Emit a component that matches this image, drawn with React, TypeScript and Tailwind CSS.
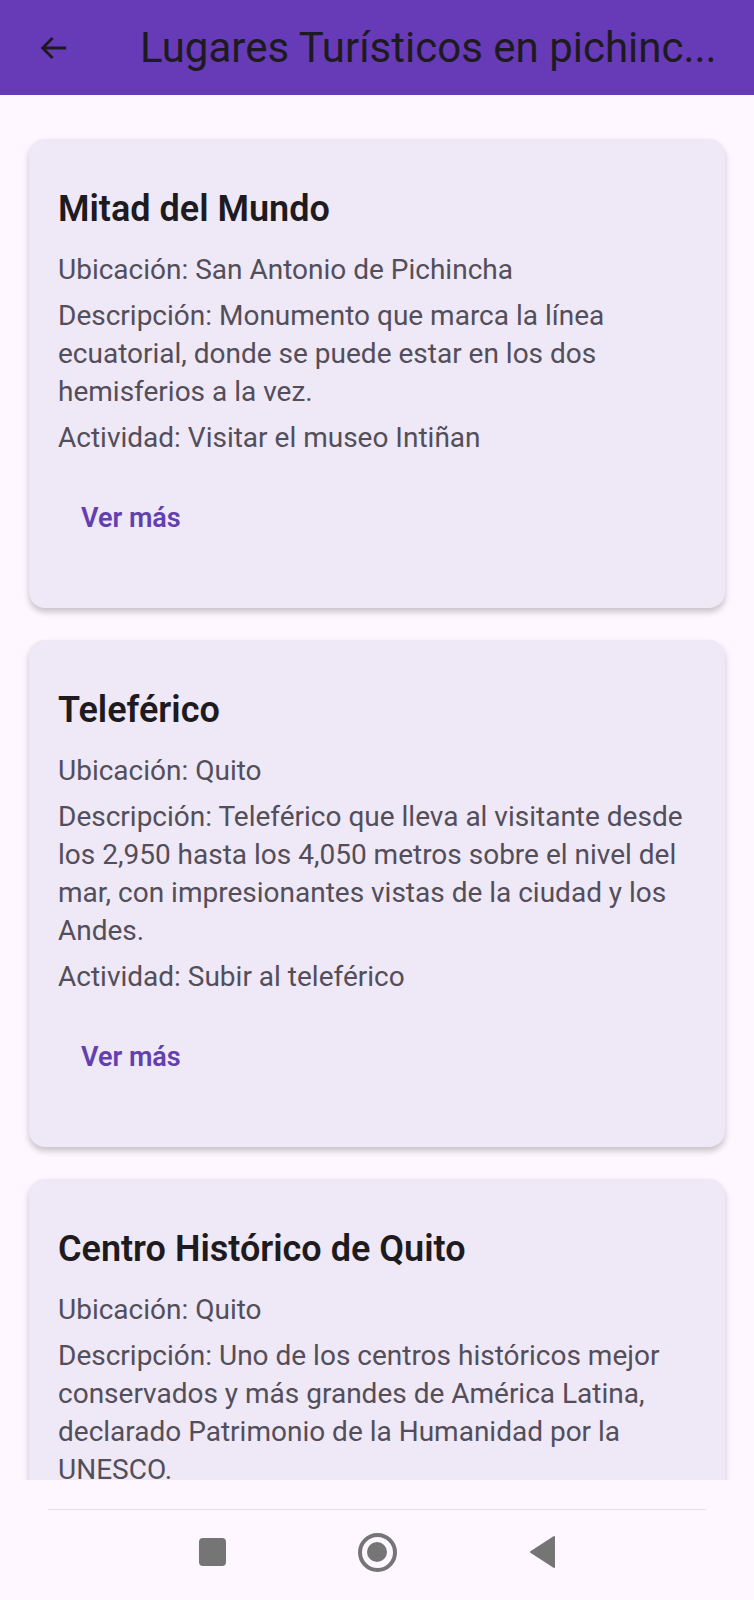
import React from "react"

const places = [
    {
        name: "Mitad del Mundo",
        location: "San Antonio de Pichincha",
        description: "Monumento que marca la línea ecuatorial, donde se puede estar en los dos hemisferios a la vez.",
        activity: "Visitar el museo Intiñan",
    },
    {
        name: "Teleférico",
        location: "Quito",
        description: "Teleférico que lleva al visitante desde los 2,950 hasta los 4,050 metros sobre el nivel del mar, con impresionantes vistas de la ciudad y los Andes.",
        activity: "Subir al teleférico",
    },
    {
        name: "Centro Histórico de Quito",
        location: "Quito",
        description: "Uno de los centros históricos mejor conservados y más grandes de América Latina, declarado Patrimonio de la Humanidad por la UNESCO.",
        activity: "Recorrer sus iglesias y plazas",
    },
]

function PlaceCard({ place }: { place: typeof places[number] }) {
    return (
        <div className="bg-[#EEE8F7] rounded-[16px] shadow-[0_4px_6px_rgba(0,0,0,0.22)] pt-[48px] pb-[66px] px-[29px] shrink-0">
            <h2 className="text-[36px] leading-[44px] font-semibold text-[#1D1B20]">{place.name}</h2>
            <div className="mt-[20px] flex flex-col gap-[8px] text-[28px] leading-[38px] text-[#534E59]">
                <p>Ubicación: {place.location}</p>
                <p>Descripción: {place.description}</p>
                <p>Actividad: {place.activity}</p>
            </div>
            <button className="mt-[37px] h-[48px] px-[23px] text-[27px] font-semibold text-[#6240B0]">Ver más</button>
        </div>
    )
}

export default function App() {
    return (
        <div className="w-[754px] h-[1600px] flex flex-col bg-[#FEF7FF] overflow-hidden" style={{ fontFamily: "Roboto, 'Noto Sans', sans-serif" }}>
            {/* app bar */}
            <div className="h-[95px] shrink-0 bg-[#673AB7] flex items-center pl-[37px] pr-[28px]">
                <svg width="34" height="34" viewBox="0 0 24 24" fill="none" stroke="#1D1B20" strokeWidth="2" className="shrink-0">
                    <path d="M20.5 12H4M11 5l-7 7 7 7" />
                </svg>
                <h1 className="ml-[69px] min-w-0 text-[42px] text-[#1D1B20] whitespace-nowrap overflow-hidden">Lugares Turísticos en pichinc...</h1>
            </div>

            <div className="h-[1385px] shrink-0 overflow-hidden px-[29px] pt-[44px] flex flex-col gap-[32px]">
                {places.map(p => <PlaceCard key={p.name} place={p} />)}
            </div>

            {/* system nav */}
            <div className="flex-1 flex flex-col px-[48px]">
                <div className="mt-[29px] h-px bg-[#E4E0E6]" />
                <div className="flex-1 flex items-center justify-center gap-[132px] pb-[6px]">
                    <div className="w-[27px] h-[28px] rounded-[4px] bg-[#757575]" />
                    <div className="w-[39px] h-[39px] rounded-full border-[4px] border-[#757575] flex items-center justify-center">
                        <div className="w-[20px] h-[20px] rounded-full bg-[#757575]" />
                    </div>
                    <svg width="27" height="32" viewBox="0 0 27 32">
                        <path d="M25 1 L2 16 L25 31 Z" fill="#757575" stroke="#757575" strokeWidth="2" strokeLinejoin="round" />
                    </svg>
                </div>
            </div>
        </div>
    )
}
